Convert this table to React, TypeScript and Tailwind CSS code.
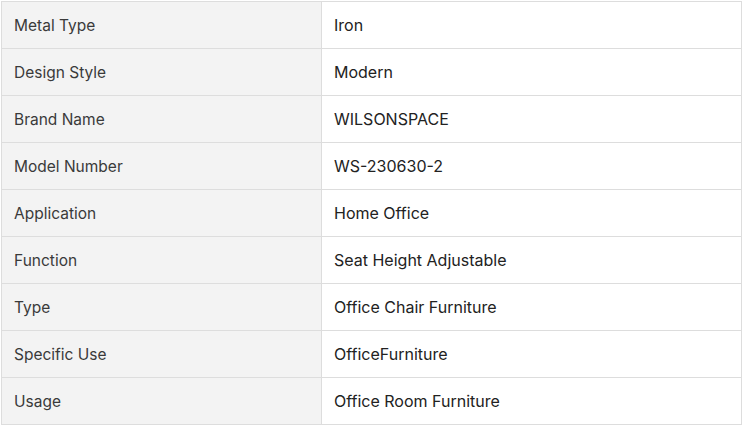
import React from "react";

const rows: [string, string][] = [
  ["Metal Type", "Iron"],
  ["Design Style", "Modern"],
  ["Brand Name", "WILSONSPACE"],
  ["Model Number", "WS-230630-2"],
  ["Application", "Home Office"],
  ["Function", "Seat Height Adjustable"],
  ["Type", "Office Chair Furniture"],
  ["Specific Use", "OfficeFurniture"],
  ["Usage", "Office Room Furniture"],
];

const App = () => {
  return (
    <main className="min-h-screen bg-white pl-px pt-px font-['Inter',sans-serif] text-[#333]">
      <table className="w-[741px] border-collapse">
        <tbody>
          {rows.map(([k, v]) => (
            <tr key={k} className="h-[47px]">
              <td className="w-[320px] border border-[#dddddd] bg-[#f3f3f3] pt-[2px] pl-[12px] align-middle text-[15.5px] text-[#3a3a3a]">{k}</td>
              <td className="border border-[#dddddd] pb-[1px] pl-[12px] align-middle text-[16px] text-[#222]">{v}</td>
            </tr>
          ))}
        </tbody>
      </table>
    </main>
  );
};

export default App;
